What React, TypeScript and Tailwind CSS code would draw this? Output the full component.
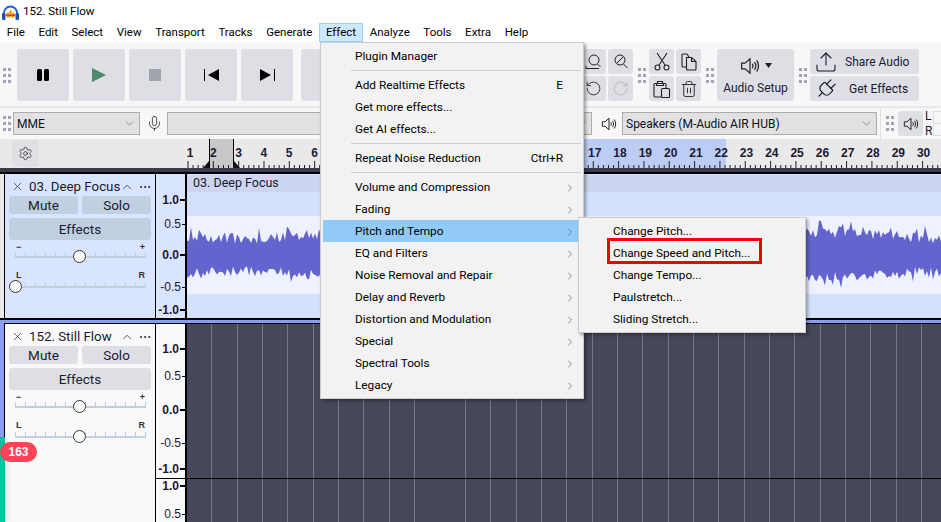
import { ChevronDown, ChevronRight, ChevronUp, Ellipsis, Mic, Plug, RotateCcw, RotateCw, Settings, Trash2, Upload, X } from 'lucide-react';

const menuBar = ['File', 'Edit', 'Select', 'View', 'Transport', 'Tracks', 'Generate', 'Effect', 'Analyze', 'Tools', 'Extra', 'Help'];
const rulerNumbers = Array.from({ length: 30 }, (_, i) => i + 1);

function Grip() {
    return (
        <div className="grid w-[8px] shrink-0 grid-cols-2 gap-x-[2px] gap-y-[3px]">
            {[0, 1, 2, 3, 4, 5].map((i) => (
                <div key={i} className="h-[3px] w-[3px] bg-[#a3a3b5]" />
            ))}
        </div>
    );
}

function TransportButton({ children }: { children?: React.ReactNode }) {
    return <div className="flex h-[52px] w-[52px] shrink-0 items-center justify-center rounded-[3px] bg-[#dedfe4]">{children}</div>;
}

function SmallButton({ children }: { children?: React.ReactNode }) {
    return <div className="flex h-[25px] w-[25px] items-center justify-center rounded-[3px] bg-[#dedfe4]">{children}</div>;
}

function Speaker({ size = 16 }: { size?: number }) {
    return (
        <svg width={size} height={size} viewBox="0 0 18 18" fill="none" stroke="#222" strokeWidth="1.100">
            <path d="M1.500 6.500h3L9 2.500v13l-4.500-4h-3z" />
            <path d="M11 7c.8 1.200.8 2.800 0 4M13 5.500c1.500 2 1.500 5 0 7M15 4c2 3 2 7 0 10" />
        </svg>
    );
}

function Logo() {
    return (
        <svg width="17" height="15" viewBox="0 0 17 15">
            <path d="M2 11V8a6.500 6.500 0 0 1 13 0v3" fill="none" stroke="#1f5fd0" strokeWidth="2" />
            <rect x="0" y="8" width="3.500" height="7" rx="1.200" fill="#1a4fb8" />
            <rect x="13.500" y="8" width="3.500" height="7" rx="1.200" fill="#1a4fb8" />
            <path d="M3.500 10l2-3 1 1 2-4 2 4 1-1 2 3-2 3-3-1-3 1z" fill="#f5a623" />
            <path d="M4 9.500h9v1.500H4z" fill="#e23b2e" />
        </svg>
    );
}

function Select({ label, className }: { label: string; className: string }) {
    return (
        <div className={`flex h-[23px] shrink-0 items-center justify-between border border-[#adadad] bg-[#e1e1e1] pl-[3px] pr-[3px] text-[12px] text-[#10101f] ${className}`}>
            <span className="pt-[1px]">{label}</span>
            <ChevronDown size={13} strokeWidth={1} className="text-[#444]" />
        </div>
    );
}

function Slider({ left, right, thumb, pan }: { left: string; right: string; thumb: string; pan?: boolean }) {
    return (
        <div className="relative h-[30px] w-[131px]">
            <div className={`relative flex justify-between px-[1px] font-['Liberation_Sans',sans-serif] text-[9px] font-bold leading-[10px] text-[#333] ${pan ? '-top-[2px]' : ''}`}>
                <span>{left}</span>
                <span>{right}</span>
            </div>
            <div className="absolute left-0 right-0 top-[10px] flex justify-between">
                {Array.from({ length: 14 }, (_, i) => (
                    <div key={i} className="h-[4px] w-px bg-[#c0d0e0]" />
                ))}
            </div>
            <div className="absolute left-0 right-0 top-[14px] h-[2px] bg-[#c0d0e0]" />
            <div className={`absolute top-[8px] h-[13px] w-[13px] rounded-full border-[1.5px] border-[#333] bg-white ${thumb}`} />
        </div>
    );
}

function TrackPanel({ name, selected, panThumb }: { name: string; selected?: boolean; panThumb: string }) {
    const button = selected ? 'bg-[#c0d0e0]' : 'bg-[#dedfe4]';
    return (
        <div className={`h-full w-[151px] shrink-0 border-r border-black pl-[4px] pt-[3px] text-[#1a1a33] ${selected ? 'bg-[#d9e5fe]' : 'bg-[#f9f9f9]'}`}>
            <div className="flex h-[19px] items-center text-[13.300px]">
                <X size={13} strokeWidth={1.200} className="ml-[2px] shrink-0" />
                <span className="ml-[5px] w-[91px] shrink-0 whitespace-nowrap">{name}</span>
                <ChevronUp size={14} strokeWidth={1.200} className="shrink-0" />
                <Ellipsis size={14} strokeWidth={1.500} className="ml-[4px] shrink-0" />
            </div>
            <div className="flex gap-[4px] text-[13.500px]">
                <div className={`flex h-[18px] w-[69px] items-center justify-center rounded-[3px] ${button}`}>Mute</div>
                <div className={`flex h-[18px] w-[69px] items-center justify-center rounded-[3px] ${button}`}>Solo</div>
            </div>
            <div className={`mt-[4px] flex h-[22px] w-[142px] items-center justify-center rounded-[3px] text-[13.500px] ${button}`}>Effects</div>
            <div className="ml-[6px] mt-[2px]">
                <Slider left="−" right="+" thumb="left-[58px]" />
                <Slider left="L" right="R" thumb={panThumb} pan />
            </div>
        </div>
    );
}

function VerticalRuler({ labels, className }: { labels: [string, number, boolean][]; className: string }) {
    return (
        <div className={`relative w-[31px] shrink-0 border-r-2 border-black ${className}`}>
            {labels.map(([text, top, bold]) => (
                <div key={text} className="absolute right-0 flex items-center" style={{ top }}>
                    <span className={`font-['Liberation_Sans',sans-serif] text-[12px] leading-[14px] text-[#1a1a33] ${bold ? 'font-bold' : ''}`}>{text}</span>
                    <div className={`ml-[1px] bg-black ${bold ? 'h-[2px] w-[5px]' : 'h-px w-[3px]'}`} />
                </div>
            ))}
        </div>
    );
}

function wavePath() {
    let seed = 17;
    const rnd = () => {
        seed = (seed * 16807) % 2147483647;
        return seed / 2147483647;
    };
    let top = 'M0 39';
    let bottom = '';
    for (let x = 0; x <= 754; x += 2) {
        const slow = Math.sin(x / 37) * 3;
        const up = 25 + slow - rnd() * 11 - (rnd() > 0.88 ? 8 : 0);
        const down = 53 - slow + rnd() * 10 + (rnd() > 0.88 ? 6 : 0);
        top += `L${x} ${up.toFixed(1)}`;
        bottom = `L${x} ${down.toFixed(1)}` + bottom;
    }
    return `${top}${bottom}Z`;
}

const gridBackground = 'bg-[repeating-linear-gradient(90deg,#464859_0,#464859_24.35px,#757784_24.35px,#757784_25.35px)]';

function MenuItem({ label, shortcut, arrow, active }: { label: string; shortcut?: string; arrow?: boolean; active?: boolean }) {
    return (
        <div className={`flex h-[22px] items-center pl-[32px] pr-[5px] pt-[1px] ${active ? 'bg-[#91c9f7]' : ''}`}>
            <span className="whitespace-nowrap">{label}</span>
            {shortcut && <span className="ml-auto mr-[13px]">{shortcut}</span>}
            {arrow && <ChevronRight size={12} strokeWidth={1.300} className="ml-auto text-[#555]" />}
        </div>
    );
}

function Separator() {
    return <div className="my-[3px] ml-[28px] h-px bg-[#d0d0d0]" />;
}

export default function App() {
    return (
        <div className="relative h-[522px] w-[941px] overflow-hidden bg-white font-['Roboto',sans-serif] text-[11.800px] text-black">
            <div className="flex h-[22px] items-center pl-[2px] pt-[2px] text-[11.500px]">
                <Logo />
                <span className="ml-[4px]">152. Still Flow</span>
            </div>

            <div className="flex h-[20px] items-center text-[11.500px]">
                {menuBar.map((item) => (
                    <div key={item} className={`flex h-[19px] items-center border px-[5.800px] pt-[1px] ${item === 'Effect' ? 'border-[#99d1ff] bg-[#cce8ff]' : 'border-transparent'}`}>
                        {item}
                    </div>
                ))}
            </div>

            <div className="flex h-[66px] items-center border-b-2 border-[#e9e9ea] bg-[#f7f7f8] pl-[3px] pr-[22px] pt-[2px] text-[12px]">
                <Grip />
                <div className="ml-[6px] flex gap-[4px]">
                    <TransportButton>
                        <div className="flex gap-[2px]">
                            <div className="h-[12px] w-[5px] rounded-[1.500px] bg-black" />
                            <div className="h-[12px] w-[5px] rounded-[1.500px] bg-black" />
                        </div>
                    </TransportButton>
                    <TransportButton>
                        <svg width="14" height="14" viewBox="0 0 14 14"><path d="M0 0l14 7-14 7z" fill="#4d8a6b" /></svg>
                    </TransportButton>
                    <TransportButton>
                        <div className="h-[12px] w-[12px] bg-[#a3a5ad]" />
                    </TransportButton>
                    <TransportButton>
                        <svg width="15" height="12" viewBox="0 0 15 12"><path d="M0 0h1v12H0zM15 0v12L4 6z" fill="#000" /></svg>
                    </TransportButton>
                    <TransportButton>
                        <svg width="15" height="12" viewBox="0 0 15 12"><path d="M14 0h1v12h-1zM0 0v12l11-6z" fill="#000" /></svg>
                    </TransportButton>
                    <div className="ml-[4px]">
                        <TransportButton />
                    </div>
                </div>

                <div className="ml-auto grid grid-cols-2 gap-[2px]">
                    <SmallButton>
                        <svg width="18" height="18" viewBox="0 0 18 18" fill="none" stroke="#222"><circle cx="9" cy="7" r="5" /><path d="M12.500 11l3 3M1 13v2.500h13" /></svg>
                    </SmallButton>
                    <SmallButton>
                        <svg width="18" height="18" viewBox="0 0 18 18" fill="none" stroke="#222"><circle cx="8" cy="7" r="5" /><path d="M11.500 11l4 4M5 10l6-6" /></svg>
                    </SmallButton>
                    <SmallButton>
                        <RotateCcw size={17} strokeWidth={1.200} className="text-[#222]" />
                    </SmallButton>
                    <SmallButton>
                        <RotateCw size={17} strokeWidth={1.200} className="text-[#b4b5bb]" />
                    </SmallButton>
                </div>
                <div className="ml-[5px]"><Grip /></div>
                <div className="ml-[3px] grid grid-cols-2 gap-[2px]">
                    <SmallButton>
                        <svg width="18" height="19" viewBox="0 0 18 19" fill="none" stroke="#222" strokeWidth="1.100">
                            <path d="M4 1l8 12M14 1L6 13" />
                            <circle cx="4.500" cy="15.500" r="2.500" />
                            <circle cx="13.500" cy="15.500" r="2.500" />
                        </svg>
                    </SmallButton>
                    <SmallButton>
                        <svg width="18" height="18" viewBox="0 0 18 18" fill="none" stroke="#222" strokeWidth="1.100">
                            <path d="M6 14H3a1 1 0 0 1-1-1V2a1 1 0 0 1 1-1h4l2 3" />
                            <path d="M6.500 4.500h5l4.500 4v7.500a1 1 0 0 1-1 1H7.500a1 1 0 0 1-1-1zM11.500 4.500v4h4.500" />
                        </svg>
                    </SmallButton>
                    <SmallButton>
                        <svg width="18" height="18" viewBox="0 0 18 18" fill="none" stroke="#222" strokeWidth="1.100">
                            <path d="M8 17H2a1 1 0 0 1-1-1V4.500a1 1 0 0 1 1-1h10a1 1 0 0 1 1 1V8" />
                            <path d="M4.500 3.500V1.500h5v2M3.500 3.500v2h7v-2" />
                            <rect x="8.500" y="8.500" width="8" height="9" rx="1" />
                        </svg>
                    </SmallButton>
                    <SmallButton><Trash2 size={18} strokeWidth={1.200} className="text-[#222]" /></SmallButton>
                </div>
                <div className="ml-[5px]"><Grip /></div>
                <div className="ml-[3px] flex h-[52px] w-[77px] flex-col items-center justify-center rounded-[3px] bg-[#dedfe4] text-[#1a1a33]">
                    <div className="flex h-[24px] items-center gap-[5px]">
                        <Speaker size={20} />
                        <svg width="7" height="5" viewBox="0 0 7 5"><path d="M0 0h7L3.500 5z" fill="#222" /></svg>
                    </div>
                    <span className="mt-[1px]">Audio Setup</span>
                </div>
                <div className="ml-[5px]"><Grip /></div>
                <div className="ml-[3px] flex flex-col gap-[2px] text-[#1a1a33]">
                    <div className="flex h-[25px] w-[109px] items-center rounded-[3px] bg-[#dedfe4] pl-[4px]">
                        <Upload size={24} strokeWidth={1.100} />
                        <span className="ml-[7px]">Share Audio</span>
                    </div>
                    <div className="flex h-[25px] w-[109px] items-center rounded-[3px] bg-[#dedfe4] pl-[4px]">
                        <Plug size={24} strokeWidth={1.200} className="rotate-45" />
                        <span className="ml-[11px]">Get Effects</span>
                    </div>
                </div>
            </div>

            <div className="flex h-[31px] items-center bg-[#f7f7f8] pl-[3px]">
                <Grip />
                <Select label="MME" className="ml-[2px] w-[127px]" />
                <Mic size={17} strokeWidth={1.100} className="ml-[6px] shrink-0 text-[#222]" />
                <Select label="" className="ml-[4px] w-[425px]" />
                <div className="ml-[9px] shrink-0"><Speaker /></div>
                <Select label="Speakers (M-Audio AIR HUB)" className="ml-[5px] w-[255px]" />
                <div className="ml-[3px] h-full w-px shrink-0 bg-[#e2e2e2]" />
                <div className="ml-[5px]"><Grip /></div>
                <div className="ml-[4px] flex h-[25px] w-[25px] shrink-0 items-center justify-center rounded-[3px] bg-[#dedfe4]"><Speaker /></div>
                <div className="ml-[2px] flex w-[8px] shrink-0 flex-col text-[12px] leading-[15px] text-[#1a1a33]">
                    <span>L</span>
                    <span>R</span>
                </div>
                <div className="flex h-[25px] flex-1 flex-col divide-y divide-[#dddddd] border-y border-l border-[#dddddd]">
                    <div className="flex-1" />
                    <div className="flex-1" />
                </div>
            </div>

            <div className="relative flex h-[29px] bg-[#e9e9ea] pl-[12px]">
                <div className="absolute bottom-0 left-[209px] top-0 w-[25px] border-x border-black bg-[#c8c8c8]" />
                <div className="absolute bottom-0 left-[500px] top-0 w-[226px] bg-[#bccdf3]" />
                <div className="relative mt-[1px] flex h-[27px] w-[27px] items-center justify-center rounded-[3px] bg-[#dfe0e4]">
                    <Settings size={15} strokeWidth={1.100} className="text-[#222]" />
                </div>
                <div className="relative ml-[138.350px] flex pt-[7px] font-['Liberation_Sans',sans-serif] text-[12px] font-bold leading-[14px] text-[#1a1a33]">
                    {rulerNumbers.map((n) => (
                        <div key={n} className={`w-[25.300px] text-center ${n > 1 && n < 10 ? 'relative -left-[2px]' : ''}`}>{n < 7 || n > 16 ? n : ''}</div>
                    ))}
                </div>
                <svg className="absolute bottom-0 left-0" width="941" height="8">
                    {Array.from({ length: 152 }, (_, i) => (
                        <rect key={i} x={187.500 + i * 5.066} y={i % 5 === 0 ? 1 : 5} width="1" height={i % 5 === 0 ? 7 : 3} fill="#222" />
                    ))}
                    <path d="M203 8l6-7v7zM234 1l6 7h-6z" fill="#111" />
                </svg>
            </div>

            <div className="h-[4px] bg-[#3b3d4d]" />
            <div className="h-[2px] bg-black" />

            <div className="flex h-[146px] border-b-2 border-black bg-[#e9e9ea] pl-[4px]">
                <div className="border-l border-black">
                    <TrackPanel name="03. Deep Focus" selected panThumb="-left-[6px]" />
                </div>
                <VerticalRuler
                    className="bg-[#d9e5fe]"
                    labels={[['1.0', 19, true], ['0.5', 43, false], ['0.0', 74, true], ['-0.5', 106, false], ['-1.0', 129, true]]}
                />
                <div className="relative flex-1 bg-[#d3e1fd] pt-[1px]">
                    <div className="flex h-[17px] items-center rounded-tl-[5px] bg-[#cdd5f0] pl-[6px] text-[12.500px] text-[#1a1a33]">03. Deep Focus</div>
                    <div className="absolute left-0 right-0 top-[42px] h-[78px] bg-[#eef2fe]">
                        <svg width="754" height="78"><path d={wavePath()} fill="#6464cf" /></svg>
                    </div>
                </div>
            </div>

            <div className="h-[3px] bg-[#8c9cf0]" />
            <div className="flex h-[199px] bg-[#8c9cf0] pl-[4px]">
                <div className="flex flex-1 border-l border-t border-black">
                    <TrackPanel name="152. Still Flow" panThumb="left-[58px]" />
                    <div className="flex flex-1 flex-col">
                        <div className="flex h-[155px] border-b border-black">
                            <VerticalRuler
                                className="bg-[#f9f9f9]"
                                labels={[['1.0', 18, true], ['0.5', 45, false], ['0.0', 79, true], ['-0.5', 112, false], ['-1.0', 138, true]]}
                            />
                            <div className={`flex-1 ${gridBackground}`} />
                        </div>
                        <div className="flex flex-1">
                            <VerticalRuler className="bg-[#f9f9f9]" labels={[['1.0', 0, true], ['0.5', 28, false]]} />
                            <div className={`flex-1 ${gridBackground}`} />
                        </div>
                    </div>
                </div>
            </div>

            <div className="absolute bottom-0 left-0 top-[437px] w-[5px] bg-[#00c4a0] shadow-[3px_0_5px_rgba(0,0,0,0.08)]" />
            <div className="absolute left-0 top-[442px] flex h-[20px] w-[37px] items-center justify-center rounded-full bg-[#ff4458] font-['Liberation_Sans',sans-serif] text-[12px] font-bold text-white">163</div>

            <div className="absolute left-[320px] top-[42px] w-[264px] border border-[#cccccc] bg-[#f2f2f2] px-[2px] py-[2px] shadow-[2px_2px_3px_rgba(0,0,0,0.35)]">
                <MenuItem label="Plugin Manager" />
                <Separator />
                <MenuItem label="Add Realtime Effects" shortcut="E" />
                <MenuItem label="Get more effects..." />
                <MenuItem label="Get AI effects..." />
                <Separator />
                <MenuItem label="Repeat Noise Reduction" shortcut="Ctrl+R" />
                <Separator />
                <MenuItem label="Volume and Compression" arrow />
                <MenuItem label="Fading" arrow />
                <MenuItem label="Pitch and Tempo" arrow active />
                <MenuItem label="EQ and Filters" arrow />
                <MenuItem label="Noise Removal and Repair" arrow />
                <MenuItem label="Delay and Reverb" arrow />
                <MenuItem label="Distortion and Modulation" arrow />
                <MenuItem label="Special" arrow />
                <MenuItem label="Spectral Tools" arrow />
                <MenuItem label="Legacy" arrow />
            </div>

            <div className="absolute left-[578px] top-[217px] w-[228px] border border-[#cccccc] bg-[#f2f2f2] py-[2px] pl-[2px] shadow-[2px_2px_3px_rgba(0,0,0,0.35)]">
                <MenuItem label="Change Pitch..." />
                <div className="relative">
                    <MenuItem label="Change Speed and Pitch..." />
                    <div className="absolute left-[26px] top-[-4px] h-[26px] w-[155px] border-[3px] border-[#f00000]" />
                </div>
                <MenuItem label="Change Tempo..." />
                <MenuItem label="Paulstretch..." />
                <MenuItem label="Sliding Stretch..." />
            </div>
        </div>
    );
}
